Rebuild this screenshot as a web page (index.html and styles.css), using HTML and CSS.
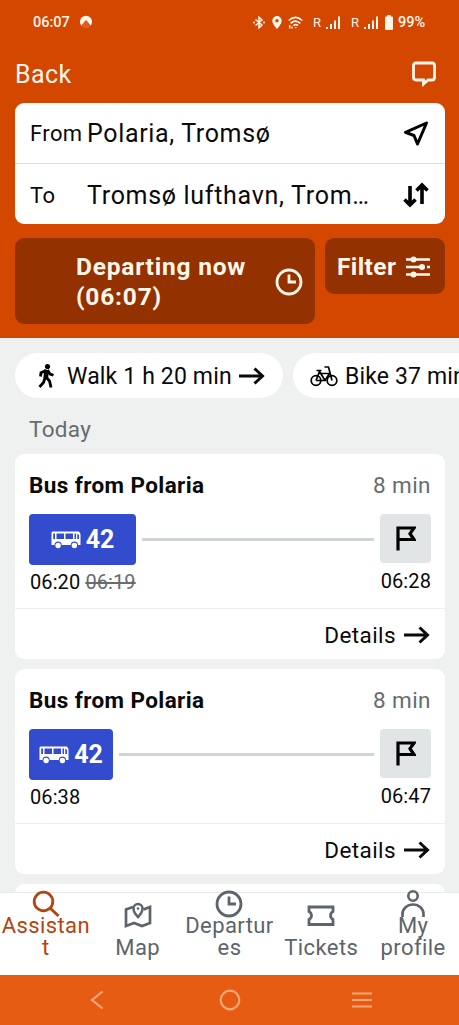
FILE: index.html
```html
<!DOCTYPE html>
<html lang="en">
<head>
<meta charset="utf-8">
<meta name="viewport" content="width=device-width, initial-scale=1">
<title>Travel assistant</title>
<link rel="stylesheet" href="styles.css">
</head>
<body>
<svg width="0" height="0" class="defs">
  <symbol id="arrow" viewBox="0 0 26 20"><path d="M0 10H23M15.500 2.500L23.500 10L15.500 17.500" fill="none" stroke="currentColor" stroke-width="3"/></symbol>
  <symbol id="bus" viewBox="0 0 30 18"><path fill="#fff" fill-rule="evenodd" d="M1.500 .5H28L29.500 3V14H27A3.600 3.600 0 0 0 19.800 14H10.700A3.600 3.600 0 0 0 3.500 14H.5V1.500ZM2.200 2.500V8H4V2.500ZM5.500 2.500V8H13V2.500ZM14.500 2.500V8H22V2.500ZM23.500 2.500V8H25V2.500ZM26.300 2.500V8H28V4Z"/><circle cx="7.100" cy="14.500" r="2.700" fill="#fff"/><circle cx="23.400" cy="14.500" r="2.700" fill="#fff"/></symbol>
  <symbol id="flag" viewBox="0 0 20 25"><path d="M2 24.500V2H18L14 7.700L18 13.500H2" fill="none" stroke="#000" stroke-width="3.200"/></symbol>
  <symbol id="clock" viewBox="0 0 28 28"><circle cx="14" cy="14" r="12" fill="none" stroke="currentColor" stroke-width="2.800"/><path d="M14 6.500V14H21" fill="none" stroke="currentColor" stroke-width="2.800"/></symbol>
  <symbol id="signal" viewBox="0 0 15 13"><path d="M1 11V13M5 8V13M9 4.500V13M13 .5V13" stroke="#fff6ea" stroke-width="2"/></symbol>
</svg>
<div class="phone">
  <header class="header">
    <div class="status">
      <span class="status-time">06:07</span>
      <svg class="app-dot" width="14" height="14" viewBox="0 0 14 14"><circle cx="7" cy="7" r="6.200" fill="#e05a25"/><path d="M2.300 10.500A6 6 0 1 1 11.700 10.500L8.500 6.500L7 5L5.500 6.500Z" fill="#fff6ea"/></svg>
      <div class="status-right">
        <svg width="12" height="13" viewBox="0 0 12 13"><path d="M2.500 3.500L9 9L6 11.800V1.200L9 4L2.500 9.500" fill="none" stroke="#fff6ea" stroke-width="1.500"/><circle cx="1" cy="6.500" r="1" fill="#fff6ea"/><circle cx="11" cy="6.500" r="1" fill="#fff6ea"/></svg>
        <svg class="pin" width="10" height="13" viewBox="0 0 10 13"><path fill="#fff6ea" fill-rule="evenodd" d="M5 0A4.700 4.700 0 0 1 9.700 4.700C9.700 8 5 13 5 13S.3 8 .3 4.700A4.700 4.700 0 0 1 5 0ZM5 3A1.700 1.700 0 1 0 5 6.400A1.700 1.700 0 1 0 5 3Z"/></svg>
        <svg class="wifi" width="15" height="13" viewBox="0 0 15 13"><path d="M.7 4.500Q7.500-1.700 14.300 4.500M2.600 7.300Q7.500 2.800 12.300 7.300M5.500 9.700Q7.800 7.600 10 9.700" fill="none" stroke="#fff6ea" stroke-width="1.600"/><path d="M7.800 12.500L6.500 11H9Z" fill="#fff6ea"/><path d="M1.700 9V12.500M4 10.500V12.500" stroke="#fff6ea" stroke-width="1.500"/></svg>
        <span class="roam">R</span><svg class="sig" width="15" height="13"><use href="#signal"/></svg>
        <span class="roam roam2">R</span><svg class="sig" width="15" height="13"><use href="#signal"/></svg>
        <svg class="battery" width="8" height="15" viewBox="0 0 8 15"><path d="M2.200 0H5.800V1.500H7A1 1 0 0 1 8 2.500V14A1 1 0 0 1 7 15H1A1 1 0 0 1 0 14V2.500A1 1 0 0 1 1 1.500H2.200Z" fill="#fff6ea"/></svg>
        <span class="percent">99%</span>
      </div>
    </div>
    <div class="title-row">
      <span class="back">Back</span>
      <svg width="26" height="26" viewBox="0 0 26 26"><path d="M5 2H21Q23.500 2 23.500 4.500V16.500Q23.500 19 21 19H17L12.500 23V19H5Q2.500 19 2.500 16.500V4.500Q2.500 2 5 2Z" fill="none" stroke="#fff6ea" stroke-width="2.800"/></svg>
    </div>
    <div class="search">
      <div class="field">
        <span class="label from">From</span><span class="value">Polaria, Tromsø</span>
        <svg width="26" height="26" viewBox="0 0 26 26"><path d="M23.500 2L2.500 11.300L11 14.500L14.500 23Z" fill="none" stroke="#000" stroke-width="3" stroke-linejoin="round"/></svg>
      </div>
      <div class="field">
        <span class="label">To</span><span class="value dest">Tromsø lufthavn, Trom…</span>
        <svg width="26" height="26" viewBox="0 0 26 26"><path d="M7 4V23M1.500 17.500L7 23L12.500 17.500M19 22V3M13.500 8.500L19 3L24.500 8.500" fill="none" stroke="#000" stroke-width="3.600"/></svg>
      </div>
    </div>
    <div class="actions">
      <div class="depart"><span>Departing now<br>(06:07)</span><svg width="28" height="28"><use href="#clock"/></svg></div>
      <div class="filter"><span>Filter</span><svg width="26" height="22" viewBox="0 0 26 22"><path d="M1 3.500H25M1 11H18M22 11H25M1 18.500H25" stroke="#fff6ea" stroke-width="2.600"/><g fill="#fff6ea"><circle cx="8.500" cy="3.500" r="3"/><circle cx="17" cy="11" r="3"/><circle cx="8.500" cy="18.500" r="3"/></g></svg></div>
    </div>
  </header>
  <main class="results">
    <div class="chips">
      <div class="chip walk">
        <svg width="18" height="26" viewBox="0 0 18 26"><circle cx="10.500" cy="3.500" r="2.600"/><path d="M10.500 7L13 11L16.500 12.300M9 7.500L4 9.800L3.500 13.500M8.500 13.500L6.500 19.500L2.500 24M9 14L12.500 18L14 24.500" fill="none" stroke="#000" stroke-width="2.800"/><path d="M7 6.500L12 7L11 16L6.500 15Z"/></svg>
        <span>Walk 1 h 20 min</span>
        <svg class="chip-arrow" width="26" height="20"><use href="#arrow"/></svg>
      </div>
      <div class="chip bike">
        <svg width="28" height="22" viewBox="0 0 28 22"><g fill="none" stroke="#000" stroke-width="1.700"><circle cx="6" cy="15.500" r="4.800"/><circle cx="22" cy="15.500" r="4.800"/><path d="M6 15.500L9.500 6.500L15 15.500H6M9.500 8.500H19.500L15 15.500M22 15.500L18.500 2H14.500M6.500 5.500H11.500"/></g></svg>
        <span>Bike 37 min</span>
      </div>
    </div>
    <h2 class="day">Today</h2>
    <article class="card">
      <div class="card-head"><h3>Bus from Polaria</h3><span class="duration">8 min</span></div>
      <div class="legs">
        <div class="badge wide"><svg width="30" height="18"><use href="#bus"/></svg><b>42</b></div>
        <div class="line"></div>
        <div class="stop"><svg width="20" height="25"><use href="#flag"/></svg></div>
      </div>
      <div class="times"><span>06:20 <s>06:19</s></span><span class="arrive">06:28</span></div>
      <div class="details"><span>Details</span><svg width="26" height="20"><use href="#arrow"/></svg></div>
    </article>
    <article class="card">
      <div class="card-head"><h3>Bus from Polaria</h3><span class="duration">8 min</span></div>
      <div class="legs">
        <div class="badge"><svg width="30" height="18"><use href="#bus"/></svg><b>42</b></div>
        <div class="line"></div>
        <div class="stop"><svg width="20" height="25"><use href="#flag"/></svg></div>
      </div>
      <div class="times"><span>06:38</span><span class="arrive">06:47</span></div>
      <div class="details"><span>Details</span><svg width="26" height="20"><use href="#arrow"/></svg></div>
    </article>
    <article class="card"></article>
  </main>
  <nav class="tabs">
    <div class="tab two active"><svg width="28" height="28" viewBox="0 0 28 28"><circle cx="11.500" cy="11.500" r="9.300" fill="none" stroke="currentColor" stroke-width="2.800"/><path d="M18 18L26.500 26" stroke="currentColor" stroke-width="3"/></svg><span>Assistan<br>t</span></div>
    <div class="tab"><svg width="28" height="28" viewBox="0 0 28 28"><path d="M9 5L2 7.500V24L10 21L18 24L26 21V5L19.500 7.500" fill="none" stroke="currentColor" stroke-width="2.700"/><path d="M14 15C11 12 9.500 9.500 9.500 6.500A4.500 4.500 0 0 1 18.500 6.500C18.500 9.500 17 12 14 15Z" fill="none" stroke="currentColor" stroke-width="2.500"/><circle cx="14" cy="6.500" r="1.300" fill="currentColor"/></svg><span>Map</span></div>
    <div class="tab two"><svg width="28" height="28"><use href="#clock"/></svg><span>Departur<br>es</span></div>
    <div class="tab"><svg width="28" height="28" viewBox="0 0 28 28"><path d="M2 5H26V9.500A4.500 4.500 0 0 0 26 17.500V22.500H2V17.500A4.500 4.500 0 0 0 2 9.500Z" fill="none" stroke="currentColor" stroke-width="2.800"/></svg><span>Tickets</span></div>
    <div class="tab two"><svg width="28" height="28" viewBox="0 0 28 28"><circle cx="14" cy="6" r="4.700" fill="none" stroke="currentColor" stroke-width="2.600"/><path d="M3.500 27V24A10.500 9.500 0 0 1 24.500 24V27" fill="none" stroke="currentColor" stroke-width="2.700"/></svg><span>My<br>profile</span></div>
  </nav>
  <footer class="system">
    <svg width="14" height="20" viewBox="0 0 14 20"><path d="M12.500 1.500L2 10L12.500 18.500"/></svg>
    <svg width="22" height="22" viewBox="0 0 22 22"><circle cx="11" cy="11" r="9.300"/></svg>
    <svg width="22" height="18" viewBox="0 0 22 18"><path d="M1 2.500H21M1 9H21M1 15.500H21"/></svg>
  </footer>
</div>
</body>
</html>
```
FILE: styles.css
```css
* { box-sizing: border-box; }
body { margin: 0; font-family: Roboto, "Liberation Sans", sans-serif; color: #0a0a0a; background: #eff1f0; }
svg { display: block; flex: none; }
.defs { position: absolute; }
h2, h3 { margin: 0; }
.phone { width: 459px; height: 1025px; overflow: hidden; display: flex; flex-direction: column; white-space: nowrap; }

.header { height: 338px; flex: none; background: #d34700; color: #fff6ea; padding: 0 14px 0 15px; }
.status { height: 44px; display: flex; align-items: center; padding-left: 18px; font-size: 14.5px; font-weight: 500; }
.status-time { width: 38px; }
.app-dot { margin-left: 8px; }
.status-right { margin-left: auto; display: flex; align-items: center; padding-right: 20px; }
.pin { margin-left: 7px; }
.wifi { margin-left: 6px; }
.roam { font-size: 13px; font-weight: 400; margin-left: 10px; width: 8px; }
.roam2 { margin-left: 10px; }
.sig { margin-left: 5px; }
.battery { margin-left: 6px; }
.percent { margin-left: 5px; font-size: 14.5px; width: 27px; }
.title-row { height: 59px; display: flex; align-items: center; justify-content: space-between; padding-right: 8px; }
.back { font-size: 25px; letter-spacing: 0.4px; padding-top: 1px; }
.search { height: 121px; border-radius: 9px; background: #fff; color: #0a0a0a; }
.field { height: 60px; display: flex; align-items: center; padding: 1px 16px 0 15px; }
.field + .field { height: 61px; border-top: 1px solid #dedfe0; padding-top: 2px; }
.label { width: 57px; font-size: 22px; letter-spacing: 0.4px; }
.value { flex: 1; font-size: 25px; letter-spacing: 0.65px; }
.dest { letter-spacing: 0.7px; }
.actions { display: flex; align-items: flex-start; gap: 10px; padding-top: 14px; font-size: 24.5px; font-weight: 700; letter-spacing: 0.8px; }
.depart { width: 300px; height: 86px; border-radius: 9px; background: #943100; padding: 1px 12px 0 61px; display: flex; align-items: center; justify-content: space-between; line-height: 30px; }
.filter { width: 120px; height: 56px; border-radius: 9px; background: #943100; padding: 1px 14px 0 12px; display: flex; align-items: center; justify-content: space-between; letter-spacing: 0.4px; }

.results { height: 554px; flex: none; overflow: hidden; padding: 15px 0 0 15px; }
.chips { display: flex; gap: 10px; height: 45px; }
.chip { height: 45px; flex: none; border-radius: 23px; background: #fff; display: flex; align-items: center; font-size: 23px; letter-spacing: 0.15px; padding-top: 1px; }
.walk { width: 268px; padding-left: 22px; }
.walk span { width: 167px; margin-left: 12px; }
.chip-arrow { margin-left: 5px; }
.bike { width: 210px; padding-left: 17px; }
.bike span { margin-left: 7px; }
.day { height: 56px; line-height: 62px; padding-left: 14px; font-size: 22.5px; font-weight: 400; letter-spacing: 0.3px; color: #666c70; }
.card { width: 430px; height: 205px; margin-bottom: 10px; border-radius: 9px; background: #fff; }
.card-head { height: 60px; display: flex; align-items: center; justify-content: space-between; padding: 2px 14px 0; font-size: 22.5px; }
.card h3 { font-size: 22.5px; font-weight: 700; letter-spacing: 0.4px; }
.duration { color: #666c70; letter-spacing: 0.45px; }
.legs { height: 51px; display: flex; align-items: flex-start; gap: 6px; padding: 0 14px; }
.badge { width: 84px; height: 51px; border-radius: 4px; background: #334bcd; color: #fff; display: flex; align-items: center; justify-content: center; gap: 5px; font-size: 25px; }
.wide { width: 107px; }
.line { flex: 1; height: 3px; margin-top: 24px; background: #d1d4d5; }
.stop { width: 51px; height: 49px; border-radius: 4px; background: #e2e5e6; display: flex; align-items: center; justify-content: center; }
.times { height: 43px; display: flex; justify-content: space-between; padding: 3px 14px 0 15px; font-size: 20px; line-height: 29px; letter-spacing: 0.1px; }
.times s { color: #666c70; text-decoration-thickness: 1.5px; }
.arrive { line-height: 26px; }
.details { height: 51px; border-top: 1px solid #edefef; display: flex; align-items: center; justify-content: flex-end; gap: 8px; padding: 2px 15px 0 0; font-size: 22.5px; letter-spacing: 0.4px; }

.tabs { height: 83px; flex: none; display: grid; grid-template-columns: repeat(5, 1fr); background: #fff; color: #5d646b; border-top: 1px solid #e8eaea; }
.tab { display: flex; flex-direction: column; align-items: center; padding-top: 9px; font-size: 22px; line-height: 22px; letter-spacing: 0.4px; text-align: center; }
.tab span { margin-top: 7px; }
.tab.two { padding-top: 0; }
.two svg { margin-top: -3px; }
.tab.two span { margin-top: -3px; }
.active { color: #b54410; }
.system { height: 50px; flex: none; background: #e65c13; display: flex; align-items: center; padding-left: 90px; }
.system svg { fill: none; stroke: #faa77a; stroke-width: 2.2; }
.system svg + svg { margin-left: 115px; }
.system svg:last-child { margin-left: 110px; }
```
